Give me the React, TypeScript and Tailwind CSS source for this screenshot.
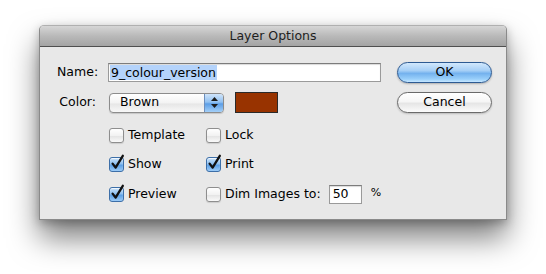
import React from "react";

const font = { fontFamily: '"DejaVu Sans", "Lucida Grande", sans-serif' };

function Check({ checked }: { checked?: boolean }) {
  return (
    <div className="relative w-[15px] h-[15px] shrink-0">
      {checked ? (
        <div className="w-[15px] h-[15px] rounded-[3px] border border-[#3d6fa8] bg-[linear-gradient(#c9e2fa,#8ec0f0_45%,#5b9fe6_55%,#9ccbf7)] shadow-[inset_0_1px_1px_rgba(255,255,255,0.8)]" />
      ) : (
        <div className="w-[15px] h-[15px] rounded-[3px] border border-[#8e8e8e] bg-[linear-gradient(#ffffff,#f2f2f2_50%,#e4e4e4_55%,#fafafa)] shadow-[0_1px_1px_rgba(0,0,0,0.12)]" />
      )}
      {checked && (
        <svg className="absolute left-[1px] top-[-3px]" width="16" height="17" viewBox="0 0 16 17">
          <path d="M2.6 9.6 L5.6 13.6 L12.8 1.8" fill="none" stroke="#111" strokeWidth="2.3" strokeLinecap="round" strokeLinejoin="round" />
        </svg>
      )}
    </div>
  );
}

function CheckItem({ label, checked, w }: { label: string; checked?: boolean; w?: string }) {
  return (
    <div className={`flex items-center h-[15px] ${w ?? ""}`}>
      <Check checked={checked} />
      <span className="ml-[4px] text-[12.5px] text-black leading-none">{label}</span>
    </div>
  );
}

export default function App() {
  return (
    <div className="w-[546px] h-[274px] bg-white pt-[25px] pl-[39px]" style={font}>
      <div className="w-[468px] h-[195px] border border-[#8a8a8a] border-t-[#b0b0b0] rounded-t-[5px] bg-[#e8e8e8] shadow-[0_18px_30px_rgba(0,0,0,0.5),0_3px_10px_rgba(0,0,0,0.25)] flex flex-col">
        <div className="h-[21px] rounded-t-[4px] border-b border-[#4f4f4f] bg-[linear-gradient(#d6d6d6,#b9b9b9_50%,#a4a4a4)] flex items-center justify-center">
          <span className="text-[12.5px] text-[#1e1e1e] leading-none">Layer Options</span>
        </div>
        <div className="flex pl-[17px] pr-[14px] pt-[15px]">
          <div className="flex-1 flex flex-col pt-[1px]">
            <div className="flex items-center h-[19px]">
              <span className="w-[38px] text-right text-[12.5px] text-black leading-none">Name:</span>
              <div className="ml-[13px] w-[273px] h-[19px] bg-white border border-[#9a9a9a] border-t-[#7c7c7c] shadow-[inset_0_1px_1px_rgba(0,0,0,0.15)] flex items-center pl-[1px]">
                <span className="bg-[#b4d3fb] text-[12.5px] text-black leading-[15px] px-[1px]">9_colour_version</span>
              </div>
            </div>
            <div className="flex items-center h-[21px] mt-[10px]">
              <span className="w-[39px] text-right text-[12.5px] text-black leading-none">Color:</span>
              <div className="ml-[13px] w-[115px] h-[20px] rounded-[4px] border border-[#8c8c8c] bg-[linear-gradient(#ffffff,#f3f3f3_50%,#e6e6e6_55%,#f8f8f8)] shadow-[0_1px_1px_rgba(0,0,0,0.15)] flex items-center overflow-hidden">
                <span className="flex-1 pl-[10px] text-[12.5px] text-black leading-none">Brown</span>
                <div className="w-[19px] h-full border-l border-[#6d8fbd] bg-[linear-gradient(#cfe4fa,#92c1f1_45%,#5c9ee6_55%,#a3cff8)] flex flex-col items-center justify-center gap-[3px]">
                  <svg width="7" height="4" viewBox="0 0 7 4"><path d="M3.5 0 L7 4 L0 4 Z" fill="#1c1c1c" /></svg>
                  <svg width="7" height="4" viewBox="0 0 7 4"><path d="M0 0 L7 0 L3.5 4 Z" fill="#1c1c1c" /></svg>
                </div>
              </div>
              <div className="ml-[11px] w-[43px] h-[21px] border border-[#2a2a2a] bg-[#983300]" />
            </div>
            <div className="flex flex-col gap-[14px] mt-[15px] pl-[52px]">
              <div className="flex">
                <CheckItem label="Template" w="w-[97px]" />
                <CheckItem label="Lock" />
              </div>
              <div className="flex">
                <CheckItem label="Show" checked w="w-[97px]" />
                <CheckItem label="Print" checked />
              </div>
              <div className="flex items-center -mt-[1px]">
                <CheckItem label="Preview" checked w="w-[97px]" />
                <CheckItem label="Dim Images to:" />
                <div className="ml-[8px] w-[33px] h-[19px] bg-white border border-[#9a9a9a] border-t-[#7c7c7c] shadow-[inset_0_1px_1px_rgba(0,0,0,0.15)] flex items-center pl-[3px]">
                  <span className="text-[12.5px] text-black leading-none">50</span>
                </div>
                <span className="ml-[9px] text-[11px] text-black leading-none -mt-[4px]">%</span>
              </div>
            </div>
          </div>
          <div className="w-[95px] flex flex-col gap-[9px]">
            <div className="h-[21px] rounded-full border border-[#2d5a92] bg-[linear-gradient(#d2e8fc,#a6cff6_40%,#74b2ee_55%,#9ad0fb_85%,#c6e6ff)] shadow-[0_1px_2px_rgba(0,0,0,0.25)] flex items-center justify-center">
              <span className="text-[12.5px] text-black leading-none">OK</span>
            </div>
            <div className="h-[21px] rounded-full border border-[#6a6a6a] bg-[linear-gradient(#ffffff,#f6f6f6_45%,#e6e6e6_55%,#fbfbfb)] shadow-[0_1px_2px_rgba(0,0,0,0.2)] flex items-center justify-center">
              <span className="text-[12.5px] text-black leading-none">Cancel</span>
            </div>
          </div>
        </div>
      </div>
    </div>
  );
}
